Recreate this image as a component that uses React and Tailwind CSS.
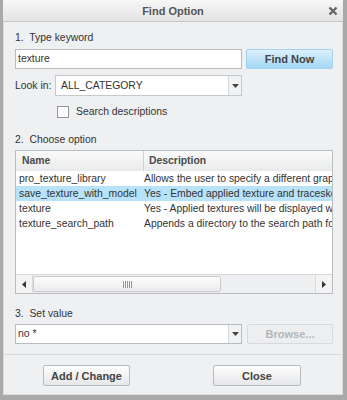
import React from "react";

const font = { fontFamily: '"Liberation Sans", Arial, sans-serif' };

function Arrow({ dir = "down" }) {
  if (dir === "down")
    return (
      <svg width="7" height="4" viewBox="0 0 7 4"><path d="M0 0h7L3.5 4z" fill="#444" /></svg>
    );
  if (dir === "left")
    return (
      <svg width="4" height="7" viewBox="0 0 4 7"><path d="M4 0v7L0 3.5z" fill="#333" /></svg>
    );
  return (
    <svg width="4" height="7" viewBox="0 0 4 7"><path d="M0 0v7l4-3.5z" fill="#333" /></svg>
  );
}

const rows = [
  ["pro_texture_library", "Allows the user to specify a different graphics library"],
  ["save_texture_with_model", "Yes - Embed applied texture and tracesketch"],
  ["texture", "Yes - Applied textures will be displayed when"],
  ["texture_search_path", "Appends a directory to the search path for"],
];

export default function App() {
  return (
    <div
      className="w-[347px] h-[400px] bg-[#a9a9a9] pl-[3px] pr-[4px] pb-[5px] flex flex-col text-[10.4px] leading-[14px] text-[#333]"
      style={font}
    >
      {/* Title bar */}
      <div className="h-[22px] shrink-0 bg-gradient-to-b from-[#f7f7f7] to-[#e3e3e3] border-b border-[#c8c8c8] flex items-center justify-center relative">
        <span className="font-bold text-[11px] text-[#555] pt-[1px]">Find Option</span>
        <span className="absolute right-[5px] top-[6px]">
          <svg width="10" height="10" viewBox="0 0 10 10">
            <path d="M1.5 1.5l7 7M8.5 1.5l-7 7" stroke="#666" strokeWidth="2.4" />
          </svg>
        </span>
      </div>

      {/* Body */}
      <div className="flex-1 bg-[#eef0f2] border-l border-r border-b border-[#dadcdf] flex flex-col pl-[11px] pr-[9px]">
        <div className="mt-[9px] h-[14px] flex items-center">1.&nbsp; Type keyword</div>

        <div className="flex mt-[4px] gap-[4px] h-[20px]">
          <div className="w-[227px] h-[20px] bg-white border border-[#b8bcc1] flex items-center pl-[2px]">
            texture
          </div>
          <div className="w-[87px] h-[20px] rounded-[2px] border border-[#a6d2ee] bg-gradient-to-b from-[#dcf0fc] to-[#a3d7f6] flex items-center justify-center font-bold text-[11px] text-[#444]">
            Find Now
          </div>
        </div>

        <div className="flex items-center mt-[6px] h-[21px]">
          <div className="w-[40px] whitespace-nowrap">Look in:</div>
          <div className="w-[187px] h-[21px] bg-white border border-[#c5c8cc] flex">
            <div className="flex-1 flex items-center pl-[5px]">ALL_CATEGORY</div>
            <div className="w-[13px] border-l border-[#d4d6d9] bg-[#f1f2f3] flex items-center justify-center">
              <Arrow />
            </div>
          </div>
        </div>

        <div className="flex items-center mt-[10px] h-[12px] pl-[42px]">
          <div className="w-[12px] h-[12px] bg-white border border-[#8f959b]"></div>
          <span className="ml-[7px] whitespace-nowrap">Search descriptions</span>
        </div>

        <div className="mt-[15px] h-[14px] flex items-center">2.&nbsp; Choose option</div>

        <div className="mt-[3px] w-[318px] h-[144px] border border-[#b9bcc0] bg-white flex flex-col">
          <div className="h-[20px] shrink-0 bg-gradient-to-b from-[#fafafa] to-[#e9eaeb] flex font-bold text-[#4a4a4a]">
            <div className="w-[128px] pl-[6px] flex items-center border-r border-[#d0d2d5]">Name</div>
            <div className="flex-1 pl-[5px] flex items-center">Description</div>
          </div>
          <div className="flex-1 flex flex-col overflow-hidden">
            {rows.map(([n, d], i) => (
              <div
                key={n}
                className={
                  "h-[15px] shrink-0 flex items-center whitespace-nowrap overflow-hidden " +
                  (i === 1 ? "bg-[#b7e2f8]" : "")
                }
              >
                <div className="w-[128px] pl-[3px] shrink-0">{n}</div>
                <div className="shrink-0">{d}</div>
              </div>
            ))}
          </div>
          <div className="h-[19px] shrink-0 border-t border-[#d6d8db] bg-[#eeeff0] flex">
            <div className="w-[17px] bg-[#f3f3f4] border-r border-[#dadbdd] flex items-center justify-center">
              <Arrow dir="left" />
            </div>
            <div className="flex-1 flex py-[1px]">
              <div className="w-[188px] rounded-[2px] border border-[#c8cacd] bg-gradient-to-b from-[#fdfdfd] to-[#ececed] flex items-center justify-center">
                <div className="flex gap-[1px]">
                  <div className="w-[1px] h-[7px] bg-[#999]"></div>
                  <div className="w-[1px] h-[7px] bg-[#999]"></div>
                  <div className="w-[1px] h-[7px] bg-[#999]"></div>
                  <div className="w-[1px] h-[7px] bg-[#999]"></div>
                  <div className="w-[1px] h-[7px] bg-[#999]"></div>
                </div>
              </div>
            </div>
            <div className="w-[17px] bg-[#f3f3f4] border-l border-[#dadbdd] flex items-center justify-center">
              <Arrow dir="right" />
            </div>
          </div>
        </div>

        <div className="mt-[13px] h-[14px] flex items-center">3.&nbsp; Set value</div>

        <div className="flex gap-[5px] mt-[3px] h-[20px]">
          <div className="w-[227px] h-[20px] bg-white border border-[#b8bcc1] flex">
            <div className="flex-1 flex items-center pl-[2px]">no *</div>
            <div className="w-[13px] border-l border-[#d4d6d9] bg-[#f1f2f3] flex items-center justify-center">
              <Arrow />
            </div>
          </div>
          <div className="w-[86px] h-[20px] rounded-[2px] border border-[#d7d9dc] bg-[#eceef0] flex items-center justify-center font-bold text-[11px] text-[#b4b6b9]">
            Browse...
          </div>
        </div>

        <div className="mt-[10px] -ml-[11px] -mr-[9px] border-t border-[#d8dadd]"></div>

        <div className="flex mt-[10px] h-[21px] pl-[28px] text-[11px]">
          <div className="w-[87px] rounded-[2px] border border-[#b8bbbf] bg-gradient-to-b from-[#fdfdfd] to-[#e6e7e9] flex items-center justify-center font-bold text-[#444]">
            Add / Change
          </div>
          <div className="ml-[83px] w-[88px] rounded-[2px] border border-[#b8bbbf] bg-gradient-to-b from-[#fdfdfd] to-[#e6e7e9] flex items-center justify-center font-bold text-[#444]">
            Close
          </div>
        </div>
      </div>
    </div>
  );
}
